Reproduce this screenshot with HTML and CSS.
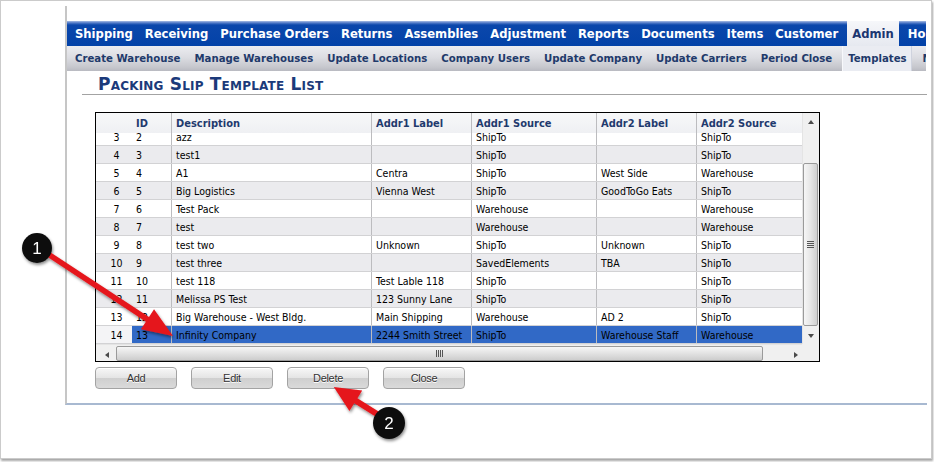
FILE: index.html
```html
<!DOCTYPE html>
<html>
<head>
<meta charset="utf-8">
<title>Packing Slip Template List</title>
<link rel="stylesheet" href="styles.css">
</head>
<body>
<div class="frame">
  <div class="panel">
    <nav class="topnav">
      <span class="tn">Shipping</span>
      <span class="tn">Receiving</span>
      <span class="tn">Purchase Orders</span>
      <span class="tn">Returns</span>
      <span class="tn">Assemblies</span>
      <span class="tn">Adjustment</span>
      <span class="tn">Reports</span>
      <span class="tn">Documents</span>
      <span class="tn">Items</span>
      <span class="tn">Customer</span>
      <span class="tn active">Admin</span>
      <span class="tn">Home</span>
    </nav>
    <nav class="subnav">
      <span class="sn">Create Warehouse</span>
      <span class="sn">Manage Warehouses</span>
      <span class="sn">Update Locations</span>
      <span class="sn">Company Users</span>
      <span class="sn">Update Company</span>
      <span class="sn">Update Carriers</span>
      <span class="sn">Period Close</span>
      <span class="sn active">Templates</span>
      <span class="sn">Maintenance</span>
    </nav>
    <div class="titlebar"><h1 class="title">Packing Slip Template List</h1></div>

    <div class="grid">
      <div class="gmain">
        <div class="ghead">
          <span class="h c0"></span>
          <span class="h c1">ID</span>
          <span class="h c2">Description</span>
          <span class="h c3">Addr1 Label</span>
          <span class="h c4">Addr1 Source</span>
          <span class="h c5">Addr2 Label</span>
          <span class="h c6">Addr2 Source</span>
        </div>
        <div class="gbody">
          <div class="row odd"><span class="c c0">3</span><span class="c c1">2</span><span class="c c2">azz</span><span class="c c3"></span><span class="c c4">ShipTo</span><span class="c c5"></span><span class="c c6">ShipTo</span></div>
          <div class="row even"><span class="c c0">4</span><span class="c c1">3</span><span class="c c2">test1</span><span class="c c3"></span><span class="c c4">ShipTo</span><span class="c c5"></span><span class="c c6">ShipTo</span></div>
          <div class="row odd"><span class="c c0">5</span><span class="c c1">4</span><span class="c c2">A1</span><span class="c c3">Centra</span><span class="c c4">ShipTo</span><span class="c c5">West Side</span><span class="c c6">Warehouse</span></div>
          <div class="row even"><span class="c c0">6</span><span class="c c1">5</span><span class="c c2">Big Logistics</span><span class="c c3">Vienna West</span><span class="c c4">ShipTo</span><span class="c c5">GoodToGo Eats</span><span class="c c6">ShipTo</span></div>
          <div class="row odd"><span class="c c0">7</span><span class="c c1">6</span><span class="c c2">Test Pack</span><span class="c c3"></span><span class="c c4">Warehouse</span><span class="c c5"></span><span class="c c6">Warehouse</span></div>
          <div class="row even"><span class="c c0">8</span><span class="c c1">7</span><span class="c c2">test</span><span class="c c3"></span><span class="c c4">Warehouse</span><span class="c c5"></span><span class="c c6">Warehouse</span></div>
          <div class="row odd"><span class="c c0">9</span><span class="c c1">8</span><span class="c c2">test two</span><span class="c c3">Unknown</span><span class="c c4">ShipTo</span><span class="c c5">Unknown</span><span class="c c6">ShipTo</span></div>
          <div class="row even"><span class="c c0">10</span><span class="c c1">9</span><span class="c c2">test three</span><span class="c c3"></span><span class="c c4">SavedElements</span><span class="c c5">TBA</span><span class="c c6">ShipTo</span></div>
          <div class="row odd"><span class="c c0">11</span><span class="c c1">10</span><span class="c c2">test 118</span><span class="c c3">Test Lable 118</span><span class="c c4">ShipTo</span><span class="c c5"></span><span class="c c6">ShipTo</span></div>
          <div class="row even"><span class="c c0">12</span><span class="c c1">11</span><span class="c c2">Melissa PS Test</span><span class="c c3">123 Sunny Lane</span><span class="c c4">ShipTo</span><span class="c c5"></span><span class="c c6">ShipTo</span></div>
          <div class="row odd"><span class="c c0">13</span><span class="c c1">12</span><span class="c c2">Big Warehouse - West Bldg.</span><span class="c c3">Main Shipping</span><span class="c c4">Warehouse</span><span class="c c5">AD 2</span><span class="c c6">ShipTo</span></div>
          <div class="row even sel"><span class="c c0">14</span><span class="c c1">13</span><span class="c c2">Infinity Company</span><span class="c c3">2244 Smith Street</span><span class="c c4">ShipTo</span><span class="c c5">Warehouse Staff</span><span class="c c6">Warehouse</span></div>
        </div>
      </div>
      <div class="vscroll">
        <div class="sbtn"><span class="tri-up"></span></div>
        <div class="vtrack"><div class="vthumb"><span class="grip-h"></span></div></div>
        <div class="sbtn"><span class="tri-down"></span></div>
      </div>
      <div class="hscroll">
        <div class="sbtn h"><span class="tri-left"></span></div>
        <div class="hthumb"><span class="grip-v"></span></div>
        <div class="hfill"></div>
        <div class="sbtn h"><span class="tri-right"></span></div>
      </div>
      <div class="corner"></div>
    </div>

    <div class="buttons">
      <button class="btn">Add</button>
      <button class="btn">Edit</button>
      <button class="btn">Delete</button>
      <button class="btn">Close</button>
    </div>
  </div>
</div>

<svg class="callouts" width="934" height="462" viewBox="0 0 934 462" xmlns="http://www.w3.org/2000/svg">
  <defs>
    <filter id="sh" x="-30%" y="-30%" width="160%" height="160%">
      <feDropShadow dx="1" dy="2" stdDeviation="1.5" flood-color="#000" flood-opacity="0.45"/>
    </filter>
  </defs>
  <g filter="url(#sh)">
    <polygon transform="translate(48 254) rotate(33.3)" fill="#e5161c" points="0,-2.8 119,-2.8 119,-12 149.5,0 119,12 119,2.8 0,2.8"/>
    <polygon transform="translate(377 414) rotate(212.1)" fill="#e5161c" points="0,-3 25,-3 25,-12 51,0 25,12 25,3 0,3"/>
    <circle cx="37" cy="248" r="15" fill="#111"/>
    <circle cx="389" cy="423" r="16" fill="#111"/>
  </g>
  <text x="37" y="254" class="num">1</text>
  <text x="389" y="429" class="num">2</text>
</svg>
</body>
</html>
```
FILE: styles.css
```css
* { box-sizing: border-box; }

html, body {
  margin: 0;
  padding: 0;
  background: #fff;
}

body {
  position: relative;
  width: 934px;
  height: 462px;
  overflow: hidden;
  font-family: "DejaVu Sans Condensed", "DejaVu Sans", sans-serif;
  font-stretch: condensed;
}

.frame {
  width: 932px;
  height: 459px;
  border: 1px solid #cbcbcb;
  box-shadow: 1px 2px 2px rgba(0, 0, 0, 0.35);
  background: #fff;
  padding: 5px 0 0 64px;
}

.panel {
  width: 862px;
  height: 399px;
  border-left: 2px solid #c6c6c6;
  border-bottom: 2px solid #a8b9d1;
  padding-top: 15px;
}

/* top navigation */
.topnav {
  display: flex;
  width: 859px;
  height: 25px;
  padding-left: 2px;
  overflow: hidden;
  white-space: nowrap;
  background: linear-gradient(#a9bde3 0, #4d77c6 2px, #0b47ab 4px, #0342a8 100%);
}

.tn {
  flex: none;
  padding: 0 6px;
  color: #fff;
  font-weight: bold;
  font-size: 12.9px;
  line-height: 25px;
}

.tn.active {
  margin: 0 3px;
  padding: 0 5px;
  color: #1b3670;
  background: linear-gradient(#f6f7fa, #e6e9f0);
}

/* sub navigation */
.subnav {
  display: flex;
  width: 859px;
  height: 25px;
  overflow: hidden;
  white-space: nowrap;
  background: linear-gradient(#ececf0 0, #dcdde2 45%, #c6c7cd 85%, #b9bac1 100%);
}

.sn {
  flex: none;
  padding: 0 7px;
  color: #1f3a6b;
  font-weight: bold;
  font-size: 11.3px;
  line-height: 25px;
}

.sn:first-child { padding-left: 8px; }

.sn.active {
  margin: 0 4px 0 3px;
  padding: 0 4px 0 5px;
  background: #eaecf2;
  border-left: 1px solid #f7f8fb;
  border-right: 1px solid #cfd3de;
}

/* title */
.titlebar {
  margin-left: 15px;
  height: 24px;
  border-bottom: 1px solid #a3a3a3;
  padding: 4px 0 0 16px;
}

.title {
  margin: 0;
  font-family: "DejaVu Sans", sans-serif;
  font-stretch: normal;
  font-size: 17px;
  line-height: 19px;
  letter-spacing: 0.2px;
  font-weight: bold;
  font-variant: small-caps;
  color: #1b3a7a;
}

/* grid */
.grid {
  margin: 17px 0 0 28px;
  width: 725px;
  height: 250px;
  border: 1px solid #000;
  display: grid;
  grid-template-columns: 706px 17px;
  grid-template-rows: 231px 17px;
}

.gmain {
  grid-column: 1;
  grid-row: 1;
  display: flex;
  flex-direction: column;
  overflow: hidden;
}

.ghead, .row {
  display: grid;
  grid-template-columns: 36px 40px 200px 100px 125px 100px 105px;
}

.ghead {
  flex: none;
  height: 20px;
  position: relative;
  z-index: 1;
  background: linear-gradient(#f7f8f9, #eff0f3);
}

.h {
  padding: 3px 0 0 4px;
  font-size: 11px;
  font-weight: bold;
  line-height: 15px;
  color: #1f3a6e;
  white-space: nowrap;
}

.gbody {
  flex: 1;
  overflow: hidden;
}

.row {
  height: 18px;
  border-bottom: 1px solid #d2d2d4;
}

.row:first-child { margin-top: -5px; }

.row.odd { background: #fff; }
.row.even { background: #ebebee; }

.c {
  padding: 2px 0 0 4px;
  font-size: 10.5px;
  line-height: 15px;
  color: #000;
  white-space: nowrap;
  overflow: hidden;
}

.c1, .c2, .c3, .c4, .c5 { border-right: 1px solid #bcbcbf; }
.c.c0 { text-align: center; padding-left: 5px; padding-right: 0; }

.row.sel .c1, .row.sel .c2, .row.sel .c3,
.row.sel .c4, .row.sel .c5, .row.sel .c6 {
  background: #3169c6;
}
.row.sel .c0 { background: #f4f4f6; }

/* scrollbars */
.vscroll {
  grid-column: 2;
  grid-row: 1;
  display: flex;
  flex-direction: column;
  background: #f0f0f0;
  border-left: 1px solid #e4e4e4;
}

.sbtn {
  flex: none;
  height: 17px;
  display: flex;
  align-items: center;
  justify-content: center;
}

.sbtn.h { width: 17px; height: 17px; }

.vtrack {
  flex: 1;
  padding-top: 33px;
}

.vthumb {
  width: 15px;
  height: 163px;
  border: 1px solid #9a9a9a;
  border-radius: 2px;
  background: linear-gradient(to right, #f6f6f6, #e6e6e6 50%, #cfcfcf);
  display: flex;
  align-items: center;
  justify-content: center;
}

.grip-h {
  width: 7px;
  height: 7px;
  background: repeating-linear-gradient(#555 0, #555 1px, transparent 1px, transparent 2px);
}

.hscroll {
  grid-column: 1;
  grid-row: 2;
  display: flex;
  align-items: center;
  background: #f0f0f0;
  border-top: 1px solid #e4e4e4;
}

.hthumb {
  flex: none;
  margin-left: 3px;
  width: 647px;
  height: 15px;
  border: 1px solid #9a9a9a;
  border-radius: 2px;
  background: linear-gradient(#f6f6f6, #e2e2e2 50%, #cdcdcd);
  display: flex;
  align-items: center;
  justify-content: center;
}

.grip-v {
  width: 7px;
  height: 7px;
  background: repeating-linear-gradient(to right, #555 0, #555 1px, transparent 1px, transparent 2px);
}

.hfill { flex: 1; }

.corner {
  grid-column: 2;
  grid-row: 2;
  background: #f0f0f0;
}

.tri-up, .tri-down, .tri-left, .tri-right {
  width: 0;
  height: 0;
}
.tri-up { border-left: 3.5px solid transparent; border-right: 3.5px solid transparent; border-bottom: 4px solid #4a4a4a; }
.tri-down { border-left: 3.5px solid transparent; border-right: 3.5px solid transparent; border-top: 4px solid #4a4a4a; }
.tri-left { border-top: 3.5px solid transparent; border-bottom: 3.5px solid transparent; border-right: 4px solid #4a4a4a; }
.tri-right { border-top: 3.5px solid transparent; border-bottom: 3.5px solid transparent; border-left: 4px solid #4a4a4a; }

/* buttons */
.buttons {
  display: flex;
  gap: 14px;
  margin: 5px 0 0 28px;
}

.btn {
  width: 82px;
  height: 22px;
  padding: 0;
  border: 1px solid #a3a3a3;
  border-radius: 4px;
  background: linear-gradient(#f7f7f7 0, #e4e4e4 50%, #cfcfcf 51%, #dadada 100%);
  box-shadow: inset 0 1px 0 #fff;
  font-family: "Liberation Sans", Arial, sans-serif;
  font-size: 11px;
  letter-spacing: -0.3px;
  color: #333;
  text-shadow: 0 1px 0 #fff;
}

/* callouts overlay */
.callouts {
  position: absolute;
  left: 0;
  top: 0;
  pointer-events: none;
}

.num {
  font-family: "Liberation Sans", Arial, sans-serif;
  font-size: 17px;
  fill: #fff;
  text-anchor: middle;
}
```
